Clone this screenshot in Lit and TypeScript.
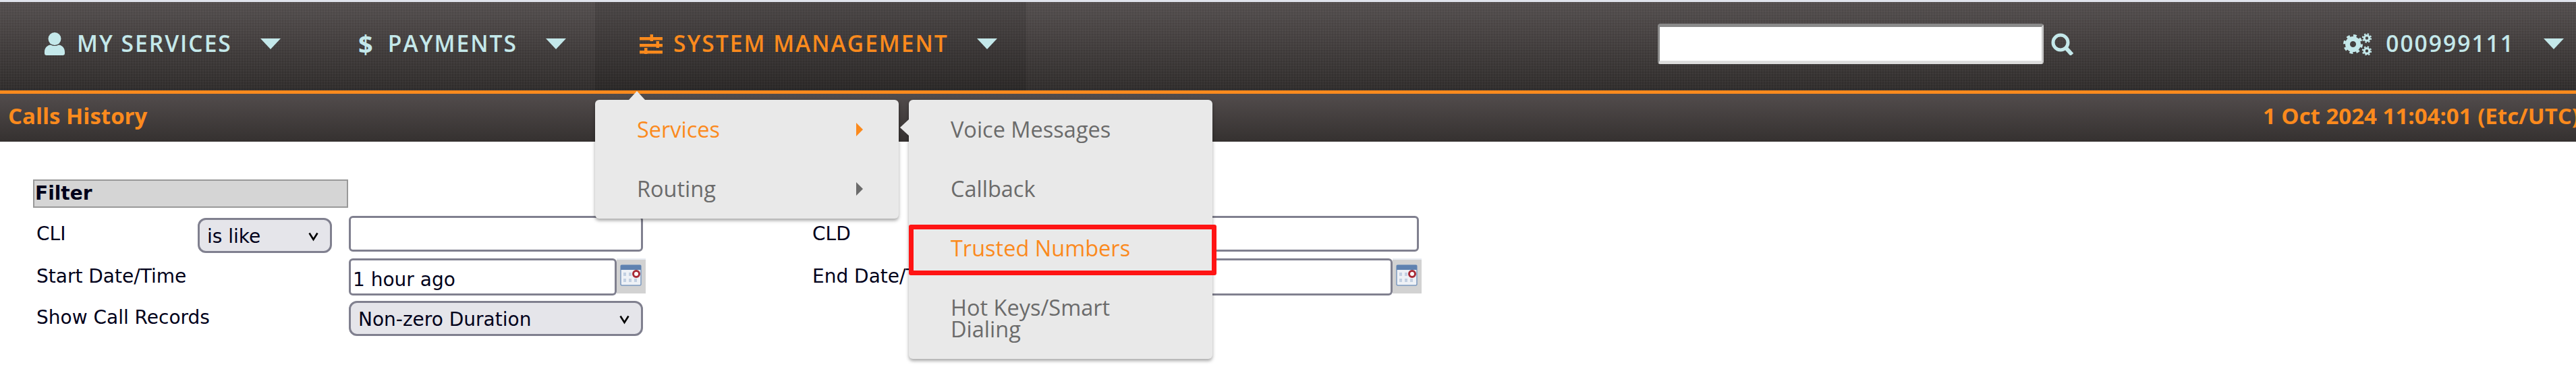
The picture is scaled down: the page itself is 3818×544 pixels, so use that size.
import { LitElement, html, css, svg } from "lit";
import { customElement } from "lit/decorators.js";

const chevron = html`<span class="chev"></span>`;

const person = svg`<svg class="ico" width="30" height="34" viewBox="0 0 30 34"><circle cx="15" cy="9.5" r="9.5" fill="currentColor"/><path d="M0 29c0-7 5-10 9-10.500q6 3 12 0c4 .5 9 3.500 9 10.500v2q0 3-3 3H3q-3 0-3-3z" fill="currentColor"/></svg>`;

const sliders = svg`<svg class="ico" width="34" height="29" viewBox="0 0 34 29" fill="currentColor"><rect y="4" width="34" height="4.500"/><rect y="14" width="34" height="4.500"/><rect y="24" width="34" height="4.500"/><rect x="15.500" y="0" width="4.500" height="10"/><rect x="24.500" y="10" width="4.500" height="10"/><rect x="7" y="20" width="4.500" height="9"/></svg>`;

const magnifier = svg`<svg width="33" height="33" viewBox="0 0 33 33" fill="none" stroke="currentColor"><circle cx="14" cy="14" r="11" stroke-width="5"/><path d="M22 22l9 10" stroke-width="6"/></svg>`;

const gears = svg`<svg width="42" height="33" viewBox="0 0 42 33" fill="none" stroke="currentColor"><circle cx="14.500" cy="16.500" r="8" stroke-width="7"/><circle cx="14.500" cy="16.500" r="12.800" stroke-width="3.400" stroke-dasharray="5 5.050"/><circle cx="35" cy="7.500" r="3.800" stroke-width="3.200"/><circle cx="35" cy="7.500" r="6.200" stroke-width="2" stroke-dasharray="2.400 2.470"/><circle cx="35" cy="26.500" r="3.800" stroke-width="3.200"/><circle cx="35" cy="26.500" r="6.200" stroke-width="2" stroke-dasharray="2.400 2.470"/></svg>`;

const calendar = svg`<svg width="43" height="52" viewBox="0 0 43 52"><rect width="43" height="52" fill="#d2d2d2"/><rect x="0" y="0" width="43" height="2" fill="#e8ecf2"/><rect x="6" y="10" width="30" height="30" rx="2" fill="#eef1f6" stroke="#7d9ac0" stroke-width="1.500"/><rect x="6" y="10" width="30" height="7" fill="#5f82b0"/><g fill="#c3d0e2"><rect x="10" y="21" width="4" height="5"/><rect x="18" y="21" width="4" height="5"/><rect x="10" y="30" width="4" height="5"/><rect x="18" y="30" width="4" height="5"/><rect x="26" y="30" width="4" height="5"/></g><circle cx="29" cy="23" r="4.500" fill="#fff" stroke="#a82a36" stroke-width="3"/></svg>`;

const selArrow = svg`<svg width="15" height="16" viewBox="0 0 15 16" fill="none" stroke="#000" stroke-width="2.600"><path d="M1.500 3.500l6 9.500 6-9.500"/></svg>`;

@customElement("app-root")
export class AppRoot extends LitElement {
  static styles = css`
    :host { display: block; background: #fff; height: 544px; overflow: hidden; font-family: "Open Sans", sans-serif; }
    .tex {
      background-image:
        repeating-linear-gradient(90deg, rgba(255,255,255,.018) 0 2px, rgba(0,0,0,.018) 2px 4px),
        repeating-linear-gradient(0deg, rgba(255,255,255,.018) 0 2px, rgba(0,0,0,.018) 2px 4px),
        linear-gradient(#544e4e, #2f2c2b);
    }
    .nav {
      display: flex; align-items: stretch; height: 131px; box-sizing: content-box;
      border-top: 3px solid #e0e3ec; border-bottom: 5px solid #fb8a1d;
      color: #c4e8ea; font-weight: 600; font-size: 33.6px; letter-spacing: 2px;
    }
    .item { position: relative; display: flex; align-items: center; padding: 0 43px 7px 66px; }
    .item.active { color: #fb8a1d; background: rgba(0,0,0,.1); }
    .slot { width: 34px; display: flex; justify-content: center; margin-right: 16px; font-size: 38px; font-weight: 700; letter-spacing: 0; line-height: 1; }
    .slot.start { justify-content: flex-start; margin-right: 14px; }
    .label { margin-right: 42px; line-height: 1; white-space: nowrap; }
    .chev { width: 0; height: 0; border-left: 15px solid transparent; border-right: 15px solid transparent; border-top: 16px solid #c4e8ea; }
    .search { margin-left: auto; margin-right: 400px; display: flex; align-items: center; gap: 11px; padding-bottom: 7px; }
    .search .box { width: 572px; height: 60px; box-sizing: border-box; background: #fff; border-style: solid; border-width: 5px 3px; border-color: #8a8a8a #c8c8c8 #dcdcdc #8a8a8a; border-radius: 4px; }
    .account { display: flex; align-items: center; padding: 0 18px 7px 0; }
    .account .gears { display: flex; margin-right: 21px; }
    .account .label { margin-right: 43px; }

    .bar {
      height: 71px; box-sizing: border-box; display: flex; justify-content: space-between; align-items: center;
      color: #fb8a1d; font-weight: 700; font-size: 33px; line-height: 1; white-space: nowrap; padding: 0 0 6px 12px;
      background: linear-gradient(#524c4c, #353130);
    }
    .bar .date { margin-right: -5px; }

    .menu {
      position: absolute; left: 0; top: 145px; width: 450px; z-index: 5; background: #e9e9e9; border-radius: 6px;
      box-shadow: 0 3px 5px rgba(0,0,0,.35); font-size: 32.5px; font-weight: 400; letter-spacing: 0; color: #6b6b6b; line-height: 32px;
    }
    .menu::before {
      content: ""; position: absolute; left: 50px; top: -13px; width: 0; height: 0;
      border-left: 12px solid transparent; border-right: 12px solid transparent; border-bottom: 13px solid #e9e9e9;
    }
    .sub { left: 465px; top: 0; }
    .sub::before {
      left: -13px; top: 29px; border-left: 0; border-top: 12px solid transparent; border-bottom: 12px solid transparent; border-right: 13px solid #e9e9e9;
    }
    .row { position: relative; display: flex; justify-content: space-between; align-items: center; padding: 28px 53px 28px 62px; }
    .row.on { color: #fb8a1d; }
    .tri { width: 0; height: 0; border-top: 10px solid transparent; border-bottom: 10px solid transparent; border-left: 10px solid #6b6b6b; }
    .row.on .tri { border-left-color: #fb8a1d; }
    .mark { position: absolute; left: 0; right: -6px; top: 9px; height: 75px; box-sizing: border-box; border: 7px solid #ff1414; border-radius: 3px; }

    .main { padding: 56px 0 0 49px; font-family: "DejaVu Sans", sans-serif; font-size: 28px; color: #00001a; }
    .head { width: 467px; height: 42px; box-sizing: border-box; background: #d5d5d5; border: 2px solid #999; font-weight: 700; line-height: 38px; padding-left: 1px; margin-bottom: 12px; }
    .grid { display: grid; grid-template-columns: 244px 224px 440px 247px 463px 440px; grid-template-rows: 55px 55px 52px; row-gap: 8px; }
    .lab { padding-left: 5px; align-self: center; padding-bottom: 1px; line-height: 1.2; white-space: nowrap; }
    .lab.sec { padding-left: 0; }
    .lab.last { padding-bottom: 3px; }
    .field { box-sizing: border-box; background: #fff; border: 3px solid #80808f; border-radius: 6px; width: 436px; height: 53px; }
    .field.date { width: 397px; height: 55px; display: flex; align-items: flex-end; padding: 0 0 2px 3px; line-height: 1.3; }
    .datewrap { display: flex; align-items: flex-start; }
    .sel { box-sizing: border-box; background: #e5e5ea; border: 3px solid #80808f; border-radius: 12px; height: 52px; display: flex; align-items: center; justify-content: space-between; padding: 2px 17px 0 11px; }
    .sel.op { width: 199px; margin-top: 3px; }
    .sel.wide { width: 436px; }
  `;

  render() {
    return html`
      <div class="nav tex">
        <div class="item">
          <span class="slot start">${person}</span>
          <span class="label">MY SERVICES</span>${chevron}
        </div>
        <div class="item">
          <span class="slot">$</span>
          <span class="label">PAYMENTS</span>${chevron}
        </div>
        <div class="item active">
          <span class="slot">${sliders}</span>
          <span class="label">SYSTEM MANAGEMENT</span>${chevron}
          <div class="menu">
            <div class="row on"><span>Services</span><span class="tri"></span></div>
            <div class="row"><span>Routing</span><span class="tri"></span></div>
            <div class="menu sub">
              <div class="row">Voice Messages</div>
              <div class="row">Callback</div>
              <div class="row on">Trusted Numbers<span class="mark"></span></div>
              <div class="row">Hot Keys/Smart<br />Dialing</div>
            </div>
          </div>
        </div>
        <div class="search"><div class="box"></div>${magnifier}</div>
        <div class="account">
          <span class="gears">${gears}</span>
          <span class="label">000999111</span>${chevron}
        </div>
      </div>
      <div class="bar">
        <span>Calls History</span>
        <span class="date">1 Oct 2024 11:04:01 (Etc/UTC)</span>
      </div>
      <div class="main">
        <div class="head">Filter</div>
        <div class="grid">
          <div class="lab">CLI</div>
          <div class="sel op"><span>is like</span>${selArrow}</div>
          <div class="field"></div>
          <div></div>
          <div class="lab sec">CLD</div>
          <div class="field"></div>

          <div class="lab">Start Date/Time</div>
          <div></div>
          <div class="datewrap"><div class="field date">1 hour ago</div>${calendar}</div>
          <div></div>
          <div class="lab sec">End Date/Time</div>
          <div class="datewrap"><div class="field date"></div>${calendar}</div>

          <div class="lab last">Show Call Records</div>
          <div></div>
          <div class="sel wide"><span>Non-zero Duration</span>${selArrow}</div>
        </div>
      </div>
    `;
  }
}
